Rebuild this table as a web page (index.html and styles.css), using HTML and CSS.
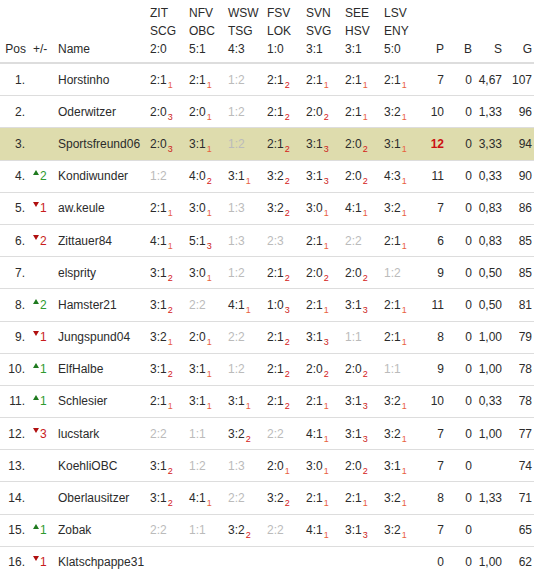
FILE: index.html
```html
<!DOCTYPE html>
<html>
<head>
<meta charset="utf-8">
<link rel="stylesheet" href="styles.css">
</head>
<body>
<table class="tbl">
<colgroup>
<col class="c-pos"><col class="c-diff"><col class="c-name">
<col class="c-g"><col class="c-g"><col class="c-g"><col class="c-g"><col class="c-g"><col class="c-g"><col class="c-g">
<col class="c-p"><col class="c-b"><col class="c-s"><col class="c-gs">
</colgroup>
<thead>
<tr>
<th class="pos">Pos</th><th class="diff">+/-</th><th class="name">Name</th>
<th class="game">ZIT<br>SCG<br>2:0</th>
<th class="game">NFV<br>OBC<br>5:1</th>
<th class="game">WSW<br>TSG<br>4:3</th>
<th class="game">FSV<br>LOK<br>1:0</th>
<th class="game">SVN<br>SVG<br>3:1</th>
<th class="game">SEE<br>HSV<br>3:1</th>
<th class="game">LSV<br>ENY<br>5:0</th>
<th class="num">P</th><th class="num">B</th><th class="num">S</th><th class="num">G</th>
</tr>
</thead>
<tbody id="rows">
<tr><td class="pos">1.</td><td class="diff"></td><td class="name">Horstinho</td>
<td class="game">2:1<sub class="p1">1</sub></td><td class="game">2:1<sub class="p1">1</sub></td><td class="game miss">1:2</td><td class="game">2:1<sub class="p2">2</sub></td><td class="game">2:1<sub class="p1">1</sub></td><td class="game">2:1<sub class="p1">1</sub></td><td class="game">2:1<sub class="p1">1</sub></td>
<td class="num">7</td><td class="num">0</td><td class="num">4,67</td><td class="num">107</td></tr>
<tr><td class="pos">2.</td><td class="diff"></td><td class="name">Oderwitzer</td>
<td class="game">2:0<sub class="p3">3</sub></td><td class="game">2:0<sub class="p1">1</sub></td><td class="game miss">1:2</td><td class="game">2:1<sub class="p2">2</sub></td><td class="game">2:0<sub class="p2">2</sub></td><td class="game">2:1<sub class="p1">1</sub></td><td class="game">3:2<sub class="p1">1</sub></td>
<td class="num">10</td><td class="num">0</td><td class="num">1,33</td><td class="num">96</td></tr>
<tr class="me"><td class="pos">3.</td><td class="diff"></td><td class="name">Sportsfreund06</td>
<td class="game">2:0<sub class="p3">3</sub></td><td class="game">3:1<sub class="p1">1</sub></td><td class="game miss">1:2</td><td class="game">2:1<sub class="p2">2</sub></td><td class="game">3:1<sub class="p3">3</sub></td><td class="game">2:0<sub class="p2">2</sub></td><td class="game">3:1<sub class="p1">1</sub></td>
<td class="num best">12</td><td class="num">0</td><td class="num">3,33</td><td class="num">94</td></tr>
<tr><td class="pos">4.</td><td class="diff up"><i class="tri"></i>2</td><td class="name">Kondiwunder</td>
<td class="game miss">1:2</td><td class="game">4:0<sub class="p2">2</sub></td><td class="game">3:1<sub class="p1">1</sub></td><td class="game">3:2<sub class="p2">2</sub></td><td class="game">3:1<sub class="p3">3</sub></td><td class="game">2:0<sub class="p2">2</sub></td><td class="game">4:3<sub class="p1">1</sub></td>
<td class="num">11</td><td class="num">0</td><td class="num">0,33</td><td class="num">90</td></tr>
<tr><td class="pos">5.</td><td class="diff down"><i class="tri"></i>1</td><td class="name">aw.keule</td>
<td class="game">2:1<sub class="p1">1</sub></td><td class="game">3:0<sub class="p1">1</sub></td><td class="game miss">1:3</td><td class="game">3:2<sub class="p2">2</sub></td><td class="game">3:0<sub class="p1">1</sub></td><td class="game">4:1<sub class="p1">1</sub></td><td class="game">3:2<sub class="p1">1</sub></td>
<td class="num">7</td><td class="num">0</td><td class="num">0,83</td><td class="num">86</td></tr>
<tr><td class="pos">6.</td><td class="diff down"><i class="tri"></i>2</td><td class="name">Zittauer84</td>
<td class="game">4:1<sub class="p1">1</sub></td><td class="game">5:1<sub class="p3">3</sub></td><td class="game miss">1:3</td><td class="game miss">2:3</td><td class="game">2:1<sub class="p1">1</sub></td><td class="game miss">2:2</td><td class="game">2:1<sub class="p1">1</sub></td>
<td class="num">6</td><td class="num">0</td><td class="num">0,83</td><td class="num">85</td></tr>
<tr><td class="pos">7.</td><td class="diff"></td><td class="name">elsprity</td>
<td class="game">3:1<sub class="p2">2</sub></td><td class="game">3:0<sub class="p1">1</sub></td><td class="game miss">1:2</td><td class="game">2:1<sub class="p2">2</sub></td><td class="game">2:0<sub class="p2">2</sub></td><td class="game">2:0<sub class="p2">2</sub></td><td class="game miss">1:2</td>
<td class="num">9</td><td class="num">0</td><td class="num">0,50</td><td class="num">85</td></tr>
<tr><td class="pos">8.</td><td class="diff up"><i class="tri"></i>2</td><td class="name">Hamster21</td>
<td class="game">3:1<sub class="p2">2</sub></td><td class="game miss">2:2</td><td class="game">4:1<sub class="p1">1</sub></td><td class="game">1:0<sub class="p3">3</sub></td><td class="game">2:1<sub class="p1">1</sub></td><td class="game">3:1<sub class="p3">3</sub></td><td class="game">2:1<sub class="p1">1</sub></td>
<td class="num">11</td><td class="num">0</td><td class="num">0,50</td><td class="num">81</td></tr>
<tr><td class="pos">9.</td><td class="diff down"><i class="tri"></i>1</td><td class="name">Jungspund04</td>
<td class="game">3:2<sub class="p1">1</sub></td><td class="game">2:0<sub class="p1">1</sub></td><td class="game miss">2:2</td><td class="game">2:1<sub class="p2">2</sub></td><td class="game">3:1<sub class="p3">3</sub></td><td class="game miss">1:1</td><td class="game">2:1<sub class="p1">1</sub></td>
<td class="num">8</td><td class="num">0</td><td class="num">1,00</td><td class="num">79</td></tr>
<tr><td class="pos">10.</td><td class="diff up"><i class="tri"></i>1</td><td class="name">ElfHalbe</td>
<td class="game">3:1<sub class="p2">2</sub></td><td class="game">3:1<sub class="p1">1</sub></td><td class="game miss">1:2</td><td class="game">2:1<sub class="p2">2</sub></td><td class="game">2:0<sub class="p2">2</sub></td><td class="game">2:0<sub class="p2">2</sub></td><td class="game miss">1:1</td>
<td class="num">9</td><td class="num">0</td><td class="num">1,00</td><td class="num">78</td></tr>
<tr><td class="pos">11.</td><td class="diff up"><i class="tri"></i>1</td><td class="name">Schlesier</td>
<td class="game">2:1<sub class="p1">1</sub></td><td class="game">3:1<sub class="p1">1</sub></td><td class="game">3:1<sub class="p1">1</sub></td><td class="game">2:1<sub class="p2">2</sub></td><td class="game">2:1<sub class="p1">1</sub></td><td class="game">3:1<sub class="p3">3</sub></td><td class="game">3:2<sub class="p1">1</sub></td>
<td class="num">10</td><td class="num">0</td><td class="num">0,33</td><td class="num">78</td></tr>
<tr><td class="pos">12.</td><td class="diff down"><i class="tri"></i>3</td><td class="name">lucstark</td>
<td class="game miss">2:2</td><td class="game miss">1:1</td><td class="game">3:2<sub class="p2">2</sub></td><td class="game miss">2:2</td><td class="game">4:1<sub class="p1">1</sub></td><td class="game">3:1<sub class="p3">3</sub></td><td class="game">3:2<sub class="p1">1</sub></td>
<td class="num">7</td><td class="num">0</td><td class="num">1,00</td><td class="num">77</td></tr>
<tr><td class="pos">13.</td><td class="diff"></td><td class="name">KoehliOBC</td>
<td class="game">3:1<sub class="p2">2</sub></td><td class="game miss">1:2</td><td class="game miss">1:3</td><td class="game">2:0<sub class="p1">1</sub></td><td class="game">3:0<sub class="p1">1</sub></td><td class="game">2:0<sub class="p2">2</sub></td><td class="game">3:1<sub class="p1">1</sub></td>
<td class="num">7</td><td class="num">0</td><td class="num"></td><td class="num">74</td></tr>
<tr><td class="pos">14.</td><td class="diff"></td><td class="name">Oberlausitzer</td>
<td class="game">3:1<sub class="p2">2</sub></td><td class="game">4:1<sub class="p1">1</sub></td><td class="game miss">2:2</td><td class="game">3:2<sub class="p2">2</sub></td><td class="game">2:1<sub class="p1">1</sub></td><td class="game">2:1<sub class="p1">1</sub></td><td class="game">3:2<sub class="p1">1</sub></td>
<td class="num">8</td><td class="num">0</td><td class="num">1,33</td><td class="num">71</td></tr>
<tr><td class="pos">15.</td><td class="diff up"><i class="tri"></i>1</td><td class="name">Zobak</td>
<td class="game miss">2:2</td><td class="game miss">1:1</td><td class="game">3:2<sub class="p2">2</sub></td><td class="game miss">2:2</td><td class="game">4:1<sub class="p1">1</sub></td><td class="game">3:1<sub class="p3">3</sub></td><td class="game">3:2<sub class="p1">1</sub></td>
<td class="num">7</td><td class="num">0</td><td class="num"></td><td class="num">65</td></tr>
<tr><td class="pos">16.</td><td class="diff down"><i class="tri"></i>1</td><td class="name">Klatschpappe31</td>
<td class="game"></td><td class="game"></td><td class="game"></td><td class="game"></td><td class="game"></td><td class="game"></td><td class="game"></td>
<td class="num">0</td><td class="num">0</td><td class="num">1,00</td><td class="num">62</td></tr>
</tbody>
</table>
</body>
</html>
```

FILE: styles.css
```css
html, body {
  margin: 0;
  padding: 0;
  background: #fff;
}

body {
  font-family: "Liberation Sans", Arial, sans-serif;
  font-size: 12px;
  color: #2b2b2b;
}

.tbl {
  border-collapse: collapse;
  table-layout: fixed;
  width: 534px;
}

.c-pos { width: 28px; }
.c-diff { width: 28px; }
.c-name { width: 92px; }
.c-g { width: 39px; }
.c-p { width: 25px; }
.c-b { width: 28px; }
.c-s { width: 30px; }
.c-gs { width: 30px; }

.tbl th {
  font-weight: normal;
  line-height: 18px;
  padding: 4px 0 4px 0;
  vertical-align: bottom;
  text-align: left;
  border-bottom: 2px solid #ddd;
  white-space: nowrap;
}

.tbl td {
  height: 31.2px;
  padding: 0;
  line-height: 18px;
  vertical-align: middle;
  border-bottom: 1px solid #ddd;
  white-space: nowrap;
}

.tbl tbody tr:last-child td {
  border-bottom: none;
}

.tbl .pos {
  text-align: right;
  padding-right: 3px;
}

.tbl th.pos {
  padding-right: 2px;
}

.tbl .diff {
  padding-left: 5px;
}

.tbl .name {
  padding-left: 2px;
}

.tbl .game {
  padding-left: 2px;
}

.tbl .num {
  text-align: right;
  padding-right: 2px;
}

.tbl td.miss {
  color: #bbb;
}

.tbl sub {
  font-size: 9px;
  line-height: 0;
  vertical-align: -4px;
  margin-left: 1px;
}

.p1 { color: #e8613f; }
.p2 { color: #d41818; }
.p3 { color: #cc1d1d; }

.me td {
  background: #dedcad;
}

.best {
  color: #cc1111;
  font-weight: bold;
}

.up { color: #2e9a2e; }
.down { color: #c81c1c; }

.tri {
  display: inline-block;
  width: 0;
  height: 0;
  border-left: 3px solid transparent;
  border-right: 3px solid transparent;
  vertical-align: 5px;
  margin-right: 1px;
}

.up .tri {
  border-bottom: 5px solid #1f7a1f;
}

.down .tri {
  border-top: 5px solid #b01010;
}
```
